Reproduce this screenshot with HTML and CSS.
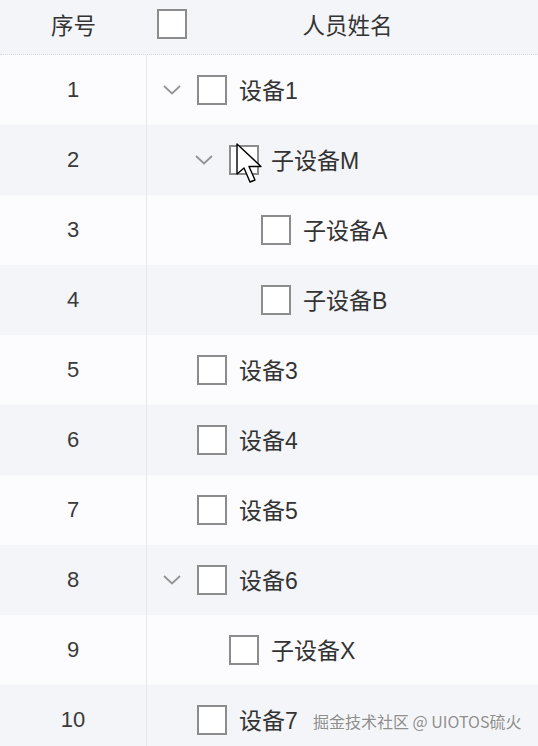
FILE: index.html
```html
<!DOCTYPE html>
<html lang="zh">
<head>
<meta charset="utf-8">
<title>设备树表格</title>
<link rel="stylesheet" href="styles.css">
</head>
<body>
<div class="table">
  <div class="head">
    <div class="col-no">序号</div>
    <div class="col-name head-name">
      <span class="box"></span>
      <span class="head-title">人员姓名</span>
    </div>
  </div>
  <div class="body">
    <div class="row odd">
      <div class="col-no">1</div>
      <div class="col-name lv1"><span class="toggle"><svg width="18" height="10" viewBox="0 0 18 10"><path d="M1 1 L9 8.5 L17 1" fill="none" stroke="#949494" stroke-width="1.8"/></svg></span><span class="box"></span><span class="label">设备1</span></div>
    </div>
    <div class="row even">
      <div class="col-no">2</div>
      <div class="col-name lv2"><span class="toggle"><svg width="18" height="10" viewBox="0 0 18 10"><path d="M1 1 L9 8.5 L17 1" fill="none" stroke="#949494" stroke-width="1.8"/></svg></span><span class="box"></span><span class="label">子设备M</span></div>
    </div>
    <div class="row odd">
      <div class="col-no">3</div>
      <div class="col-name lv3"><span class="toggle"></span><span class="box"></span><span class="label">子设备A</span></div>
    </div>
    <div class="row even">
      <div class="col-no">4</div>
      <div class="col-name lv3"><span class="toggle"></span><span class="box"></span><span class="label">子设备B</span></div>
    </div>
    <div class="row odd">
      <div class="col-no">5</div>
      <div class="col-name lv1"><span class="toggle"></span><span class="box"></span><span class="label">设备3</span></div>
    </div>
    <div class="row even">
      <div class="col-no">6</div>
      <div class="col-name lv1"><span class="toggle"></span><span class="box"></span><span class="label">设备4</span></div>
    </div>
    <div class="row odd">
      <div class="col-no">7</div>
      <div class="col-name lv1"><span class="toggle"></span><span class="box"></span><span class="label">设备5</span></div>
    </div>
    <div class="row even">
      <div class="col-no">8</div>
      <div class="col-name lv1"><span class="toggle"><svg width="18" height="10" viewBox="0 0 18 10"><path d="M1 1 L9 8.5 L17 1" fill="none" stroke="#949494" stroke-width="1.8"/></svg></span><span class="box"></span><span class="label">设备6</span></div>
    </div>
    <div class="row odd">
      <div class="col-no">9</div>
      <div class="col-name lv2"><span class="toggle"></span><span class="box"></span><span class="label">子设备X</span></div>
    </div>
    <div class="row even">
      <div class="col-no">10</div>
      <div class="col-name lv1"><span class="toggle"></span><span class="box"></span><span class="label">设备7</span></div>
    </div>
  </div>
</div>
<svg class="cursor" width="28" height="42" viewBox="0 0 28 42"><path d="M1 1 L1 31 L8 25 L14 39 L19 37 L13 23.5 L25 23.5 Z" fill="#fff" stroke="#000" stroke-width="1.4" stroke-linejoin="round"/></svg>
<div class="watermark">掘金技术社区 @ UIOTOS硫火</div>
</body>
</html>
```
FILE: styles.css
```css
html, body {
  margin: 0;
  padding: 0;
  width: 538px;
  height: 746px;
  overflow: hidden;
  background: #fcfcfe;
  font-family: "Liberation Sans", "Noto Sans CJK SC", sans-serif;
  color: #333;
}

.table {
  display: flex;
  flex-direction: column;
}

.head {
  display: flex;
  height: 55px;
  padding-bottom: 7px;
  box-sizing: border-box;
  align-items: center;
  background: #f4f5f8;
  border-bottom: 1px dotted #d8dbe2;
}

.col-no {
  width: 147px;
  flex: none;
  text-align: center;
  font-size: 22px;
  color: #3a3a3a;
}

.head .col-no {
  font-size: 22.5px;
  color: #333;
}

.head-name {
  flex: 1;
  display: flex;
  align-items: center;
  padding-left: 10px;
}

.head-title {
  flex: 1;
  text-align: center;
  font-size: 22.5px;
  padding-right: 30px;
}

.body {
  display: flex;
  flex-direction: column;
}

.row {
  display: flex;
  height: 70px;
  align-items: center;
}

.row .col-no {
  align-self: stretch;
  display: flex;
  align-items: center;
  justify-content: center;
  border-right: 1px solid #e6e8ee;
  box-sizing: border-box;
}

.odd { background: #fcfcfe; }
.even { background: #f3f5f8; }

.row .col-name {
  flex: 1;
  display: flex;
  align-items: center;
  font-size: 23px;
  padding-left: 10px;
}

.lv2 { padding-left: 42px !important; }
.lv3 { padding-left: 74px !important; }

.toggle {
  width: 36px;
  flex: none;
  display: flex;
  align-items: center;
  padding-left: 6px;
  box-sizing: border-box;
  height: 20px;
}

.box {
  width: 30px;
  height: 30px;
  box-sizing: border-box;
  border: 2px solid #8c8c8c;
  background: #fff;
  flex: none;
  margin-left: 4px;
}

.head .box {
  margin-left: 0;
}

.label {
  margin-left: 12px;
  color: #333;
  position: relative;
  top: -1px;
}

.cursor {
  position: absolute;
  left: 236px;
  top: 143px;
}

.watermark {
  position: absolute;
  left: 313px;
  top: 709px;
  font-size: 16px;
  color: #8e8e8e;
  text-shadow: 0 0 2px #fff;
  font-family: "Noto Sans CJK SC", sans-serif;
  white-space: nowrap;
}
```
